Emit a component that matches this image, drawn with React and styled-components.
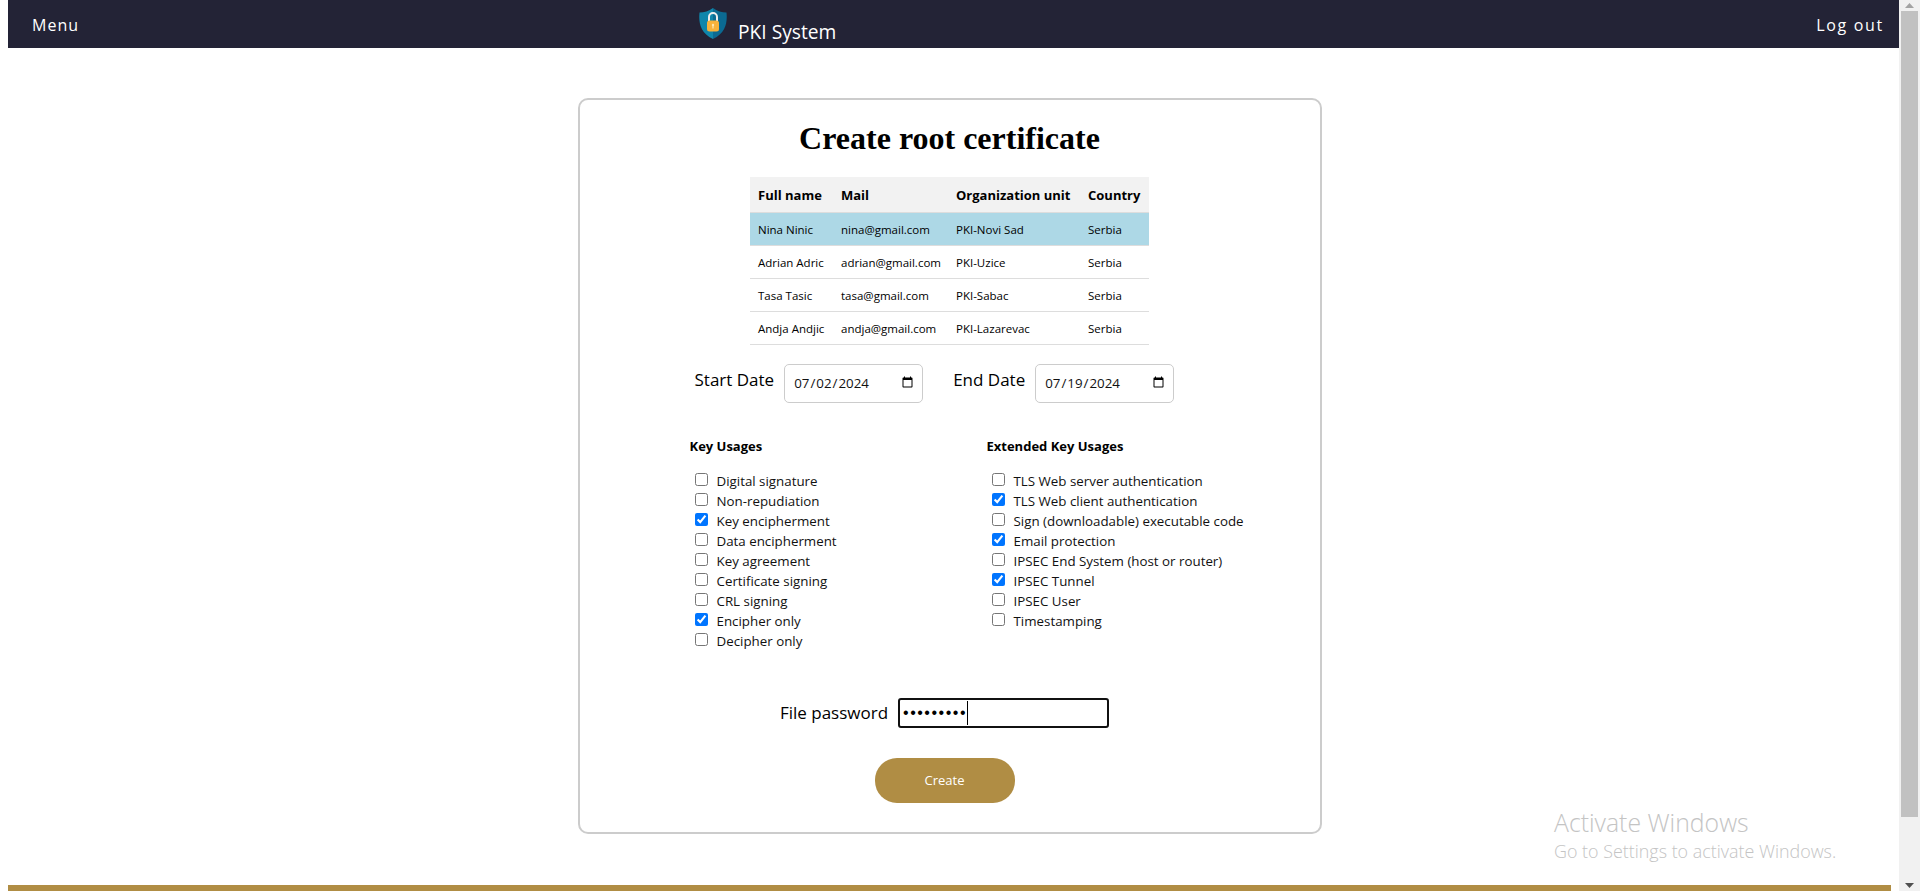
import React from "react";
import styled, { createGlobalStyle } from "styled-components";

const GlobalStyle = createGlobalStyle`
  html, body {
    margin: 0;
    padding: 0;
    height: 891px;
    overflow: hidden;
    background: #fff;
    font-family: "Open Sans", "Noto Sans", sans-serif;
  }
  * { box-sizing: border-box; }
`;

const users = [
  { name: "Nina Ninic", mail: "nina@gmail.com", unit: "PKI-Novi Sad", country: "Serbia", selected: true },
  { name: "Adrian Adric", mail: "adrian@gmail.com", unit: "PKI-Uzice", country: "Serbia" },
  { name: "Tasa Tasic", mail: "tasa@gmail.com", unit: "PKI-Sabac", country: "Serbia" },
  { name: "Andja Andjic", mail: "andja@gmail.com", unit: "PKI-Lazarevac", country: "Serbia" },
];

const keyUsages = [
  ["Digital signature", false],
  ["Non-repudiation", false],
  ["Key encipherment", true],
  ["Data encipherment", false],
  ["Key agreement", false],
  ["Certificate signing", false],
  ["CRL signing", false],
  ["Encipher only", true],
  ["Decipher only", false],
];

const extendedUsages = [
  ["TLS Web server authentication", false],
  ["TLS Web client authentication", true],
  ["Sign (downloadable) executable code", false],
  ["Email protection", true],
  ["IPSEC End System (host or router)", false],
  ["IPSEC Tunnel", true],
  ["IPSEC User", false],
  ["Timestamping", false],
];

const Shell = styled.div`
  display: flex;
  height: 891px;
  overflow: hidden;
  position: relative;
`;

const Page = styled.div`
  flex: 1;
  min-width: 0;
  padding-left: 8px;
`;

const Navbar = styled.nav`
  height: 48px;
  background: #232336;
  color: #fff;
  display: grid;
  grid-template-columns: 667px 1fr auto;
  align-items: start;
  padding: 0 15px 0 24px;
`;

const NavLink = styled.a`
  font-size: 16px;
  letter-spacing: ${(p) => (p.$wide ? "1.7px" : "1px")};
  line-height: 22px;
  margin-top: 14px;
  color: #fff;
`;

const Brand = styled.div`
  display: flex;
  align-items: flex-start;
  gap: 11px;
  padding-top: 8px;
  font-size: 19.2px;
  line-height: 27px;
`;

const BrandName = styled.span`
  margin-top: 10px;
`;

const Content = styled.div`
  padding-right: 8px;
`;

const Card = styled.main`
  width: 744px;
  height: 736px;
  margin: 50px auto 0;
  border: 2px solid #ccc;
  border-radius: 10px;
  padding-top: 20px;
  display: flex;
  flex-direction: column;
`;

const Title = styled.h1`
  font-family: "Liberation Serif", serif;
  font-size: 32px;
  line-height: 37px;
  font-weight: 700;
  margin: 0 0 20px;
  text-align: center;
  color: #000;
`;

const Table = styled.table`
  border-collapse: collapse;
  table-layout: fixed;
  width: 399px;
  margin: 0 auto;
  font-size: 11.5px;
`;

const HeadCell = styled.th`
  background: #f2f2f2;
  height: 35px;
  padding: 1px 8px 0;
  text-align: left;
  font-size: 13px;
  font-weight: 700;
  white-space: nowrap;
  border-bottom: 1px solid #ddd;
`;

const Cell = styled.td`
  height: 33px;
  padding: 1px 8px 0;
  white-space: nowrap;
  border-bottom: 1px solid #ddd;
  background: ${(p) => (p.$selected ? "#add8e6" : "transparent")};
`;

const DateRow = styled.div`
  display: flex;
  align-items: flex-start;
  margin-top: 19px;
  padding-left: 115px;
`;

const DateLabel = styled.label`
  font-size: 17px;
  line-height: 24px;
  margin-top: 4px;
  margin-right: 10px;
`;

const DateInput = styled.input`
  width: 139px;
  height: 39px;
  border: 1px solid #ccc;
  border-radius: 5px;
  padding: 0 6px 0 8px;
  margin-right: 30px;
  font-family: inherit;
  font-size: 13.33px;
  color: #111;
  background: #fff;
`;

const Usages = styled.div`
  display: grid;
  grid-template-columns: 297px 1fr;
  margin-top: 34px;
  padding-left: 110px;
`;

const UsageTitle = styled.h4`
  font-size: 13px;
  line-height: 18px;
  font-weight: 700;
  margin: 0 0 16px;
`;

const UsageRow = styled.label`
  display: flex;
  align-items: center;
  height: 20px;
  padding-left: 5px;
  font-size: 13.33px;
  color: #111;
`;

const Check = styled.input`
  width: 13px;
  height: 13px;
  margin: 0 9px 2px 0;
  flex: none;
`;

const PasswordRow = styled.div`
  display: flex;
  align-items: center;
  justify-content: center;
  gap: 10px;
  margin-top: 47px;
  padding-right: 10px;
`;

const PasswordLabel = styled.label`
  font-size: 17px;
`;

const PasswordField = styled.div`
  position: relative;
  width: 211px;
  height: 30px;
`;

const PasswordInput = styled.input`
  width: 100%;
  height: 100%;
  border: 2px solid #111;
  border-radius: 3px;
  outline: none;
  padding: 0 3px;
  font-size: 16px;
  letter-spacing: 1.5px;
  caret-color: transparent;
`;

const Caret = styled.span`
  position: absolute;
  left: 69px;
  top: 3px;
  width: 1px;
  height: 24px;
  background: #000;
`;

const CreateButton = styled.button`
  display: block;
  width: 140px;
  height: 45px;
  margin: 30px auto 0;
  border: 0;
  border-radius: 22px;
  background: #b08d44;
  color: #fff;
  font-family: inherit;
  font-size: 13px;
  position: relative;
  left: -5px;
`;

const Footer = styled.footer`
  height: 20px;
  margin: 51px 8px 0 0;
  background: #b08d44;
`;

const Scrollbar = styled.div`
  width: 21px;
  flex: none;
  background: #f1f1f1;
  display: flex;
  flex-direction: column;
  align-items: center;
`;

const ArrowButton = styled.div`
  height: 11px;
  display: flex;
  align-items: center;
  color: #505050;
`;

const Thumb = styled.div`
  width: 17px;
  height: 806px;
  background: #c1c1c1;
  margin-bottom: 63px;
`;

const Watermark = styled.div`
  position: absolute;
  left: 1554px;
  top: 806px;
  color: #c4c4c4;
  font-weight: 300;
  pointer-events: none;
`;

const WatermarkTitle = styled.div`
  font-size: 24.8px;
  line-height: 33px;
`;

const WatermarkText = styled.div`
  font-size: 17.9px;
  line-height: 25px;
`;

const ShieldLogo = () => (
  <svg width="28" height="31" viewBox="0 0 28 31">
    <path d="M14 0 C10 3 5 4.5 0.5 4.5 C-0.5 14 1 25 14 31 Z" fill="#0f86ab" />
    <path d="M14 0 C18 3 23 4.5 27.5 4.5 C28.5 14 27 25 14 31 Z" fill="#0b6a92" />
    <path d="M10 13 V9 a4 4 0 0 1 8 0 V13" fill="none" stroke="#eee" strokeWidth="2" />
    <rect x="8" y="12.5" width="12" height="11" rx="2.5" fill="#f7b23b" />
    <circle cx="14" cy="17" r="1.2" fill="#fde7b0" />
    <rect x="13.4" y="17" width="1.2" height="3.5" fill="#fde7b0" />
  </svg>
);

const UsageColumn = ({ title, items }) => (
  <div>
    <UsageTitle>{title}</UsageTitle>
    {items.map(([label, checked]) => (
      <UsageRow key={label}>
        <Check type="checkbox" defaultChecked={checked} />
        {label}
      </UsageRow>
    ))}
  </div>
);

export default function App() {
  return (
    <Shell>
      <GlobalStyle />
      <Page>
        <Navbar>
          <NavLink>Menu</NavLink>
          <Brand>
            <ShieldLogo />
            <BrandName>PKI System</BrandName>
          </Brand>
          <NavLink $wide>Log out</NavLink>
        </Navbar>
        <Content>
          <Card>
            <Title>Create root certificate</Title>
            <Table>
              <colgroup>
                <col style={{ width: 83 }} />
                <col style={{ width: 115 }} />
                <col style={{ width: 132 }} />
                <col style={{ width: 69 }} />
              </colgroup>
              <thead>
                <tr>
                  <HeadCell>Full name</HeadCell>
                  <HeadCell>Mail</HeadCell>
                  <HeadCell>Organization unit</HeadCell>
                  <HeadCell>Country</HeadCell>
                </tr>
              </thead>
              <tbody>
                {users.map((u) => (
                  <tr key={u.mail}>
                    <Cell $selected={u.selected}>{u.name}</Cell>
                    <Cell $selected={u.selected}>{u.mail}</Cell>
                    <Cell $selected={u.selected}>{u.unit}</Cell>
                    <Cell $selected={u.selected}>{u.country}</Cell>
                  </tr>
                ))}
              </tbody>
            </Table>
            <DateRow>
              <DateLabel>Start Date</DateLabel>
              <DateInput type="date" defaultValue="2024-07-02" />
              <DateLabel>End Date</DateLabel>
              <DateInput type="date" defaultValue="2024-07-19" />
            </DateRow>
            <Usages>
              <UsageColumn title="Key Usages" items={keyUsages} />
              <UsageColumn title="Extended Key Usages" items={extendedUsages} />
            </Usages>
            <PasswordRow>
              <PasswordLabel>File password</PasswordLabel>
              <PasswordField>
                <PasswordInput type="password" defaultValue="password1" />
                <Caret />
              </PasswordField>
            </PasswordRow>
            <CreateButton>Create</CreateButton>
          </Card>
        </Content>
        <Footer />
      </Page>
      <Scrollbar>
        <ArrowButton>
          <svg width="9" height="5" viewBox="0 0 9 5"><path d="M4.5 0 L9 5 H0 Z" fill="#a3a3a3" /></svg>
        </ArrowButton>
        <Thumb />
        <ArrowButton>
          <svg width="9" height="5" viewBox="0 0 9 5"><path d="M0 0 H9 L4.5 5 Z" fill="#505050" /></svg>
        </ArrowButton>
      </Scrollbar>
      <Watermark>
        <WatermarkTitle>Activate Windows</WatermarkTitle>
        <WatermarkText>Go to Settings to activate Windows.</WatermarkText>
      </Watermark>
    </Shell>
  );
}
